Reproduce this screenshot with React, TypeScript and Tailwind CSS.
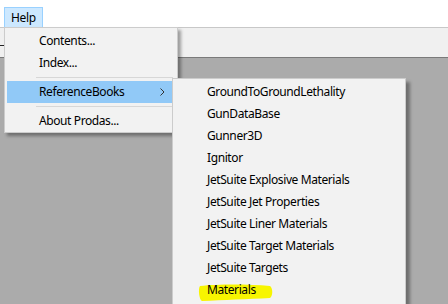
import React from "react";

const font = { fontFamily: '"Segoe UI", "Noto Sans", "Open Sans", sans-serif' };

function Item({ label, active, arrow }: { label: string; active?: boolean; arrow?: boolean }) {
  return (
    <div
      className={`relative flex h-[22px] items-center pl-[32px] text-[12px] tracking-[-0.4px] text-black ${
        active ? "bg-[#91c9f7]" : ""
      }`}
    >
      <span>{label}</span>
      {arrow && (
        <svg className="absolute right-[10px] top-[7px]" width="5" height="8" viewBox="0 0 5 8">
          <path d="M0.5 0.5 L4 4 L0.5 7.5" fill="none" stroke="#333" strokeWidth="1" />
        </svg>
      )}
    </div>
  );
}

function Sep() {
  return (
    <div className="flex h-[7px] items-center pl-[29px] pr-[2px]">
      <div className="h-px w-full bg-[#d7d7d7]" />
    </div>
  );
}

const books = [
  "GroundToGroundLethality",
  "GunDataBase",
  "Gunner3D",
  "Ignitor",
  "JetSuite Explosive Materials",
  "JetSuite Jet Properties",
  "JetSuite Liner Materials",
  "JetSuite Target Materials",
  "JetSuite Targets",
];

export default function App() {
  return (
    <div className="relative h-[304px] w-[448px] overflow-hidden bg-[#ababab]" style={font}>
      {/* menu bar */}
      <div className="flex h-[27px] items-end bg-white pl-[4px]">
        <div className="flex h-[20px] items-center border border-b-0 border-[#99d1ff] bg-[#cce8ff] px-[6px] text-[12px] tracking-[-0.3px] text-black">
          Help
        </div>
      </div>
      <div className="h-px bg-[#c8c8c8]" />
      {/* toolbar */}
      <div className="relative h-[29px] bg-[#f0f0f0]">
        <div className="absolute left-0 top-[9px] h-[9px] w-[4px] border-b border-[#222]" />
      </div>
      <div className="h-px bg-[#7a7a7a]" />

      {/* Help menu */}
      <div className="absolute left-[4px] top-[27px] w-[174px] border border-[#cccccc] bg-[#f2f2f2] px-[2px] pt-[2px] shadow-[3px_3px_3px_rgba(0,0,0,0.35)]">
        <Item label="Contents..." />
        <Item label="Index..." />
        <Sep />
        <Item label="ReferenceBooks" active arrow />
        <Sep />
        <Item label="About Prodas..." />
      </div>

      {/* submenu */}
      <div className="absolute left-[172px] top-[78px] h-[240px] w-[234px] border border-[#cccccc] bg-[#f2f2f2] px-[2px] pt-[2px] shadow-[4px_4px_3px_rgba(0,0,0,0.35)]">
        {books.map((b) => (
          <Item key={b} label={b} />
        ))}
        <div className="relative flex h-[22px] items-center pl-[32px] text-[12px] tracking-[-0.4px] text-black">
          <svg className="absolute left-[23px] top-[4px]" width="76" height="20" viewBox="0 0 76 20">
            <path
              d="M2 3 C20 1 50 1 72 3 C75 5 75 13 72 15 C50 16 25 17 4 18 C1 17 0 5 2 3 Z"
              fill="#f7f500"
            />
          </svg>
          <span className="relative">Materials</span>
        </div>
      </div>
    </div>
  );
}
